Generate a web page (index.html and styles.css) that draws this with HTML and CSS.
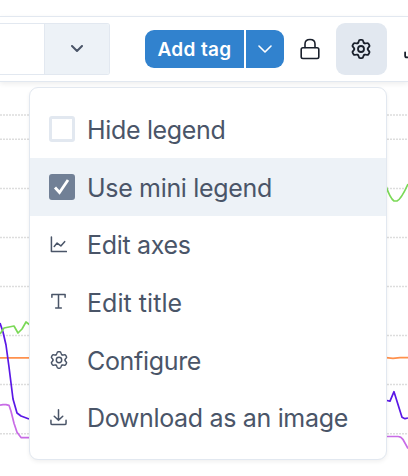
FILE: index.html
```html
<!DOCTYPE html>
<html lang="en">
<head>
<meta charset="utf-8">
<title>Chart settings</title>
<link rel="stylesheet" href="styles.css">
</head>
<body>
<svg width="0" height="0" class="defs">
  <defs><path id="tooth" d="M6.650 4.200Q7.500 3.710 7.700 2.500 7.950 .900 9.200 .900H10.800Q12.050 .900 12.300 2.500 12.500 3.710 13.350 4.200"/></defs>
  <symbol id="gear" viewBox="0 0 20 20">
    <use href="#tooth"/>
    <use href="#tooth" transform="rotate(60 10 10)"/>
    <use href="#tooth" transform="rotate(120 10 10)"/>
    <use href="#tooth" transform="rotate(180 10 10)"/>
    <use href="#tooth" transform="rotate(240 10 10)"/>
    <use href="#tooth" transform="rotate(300 10 10)"/>
    <circle cx="10" cy="10" r="3"/>
  </symbol>
  <symbol id="tray" viewBox="0 0 18 18">
    <path d="M9 .8v11M4.500 7.600 9 12l4.500-4.400M1 12v3q0 1.500 1.500 1.500h13q1.500 0 1.500-1.500v-3"/>
  </symbol>
</svg>
<header class="toolbar">
  <div class="select"><div class="value"></div><div class="toggle"><svg class="icon" width="12" height="8" viewBox="0 0 12 8"><path d="M1 1l5 5 5-5"/></svg></div></div>
  <div class="tag-group">
    <button class="tag">Add tag</button>
    <button class="tag-more"><svg class="icon" width="14" height="8" viewBox="0 0 14 8"><path d="M1 1l6 6 6-6"/></svg></button>
  </div>
  <svg class="icon lock" width="20" height="22" viewBox="0 0 20 22"><rect x="1.200" y="9.700" width="17.600" height="10.800" rx="1.700"/><path d="M5 9.500V6q0-4.500 5-4.500T15 6v3.500"/></svg>
  <button class="settings"><svg class="icon" width="20" height="20"><use href="#gear"/></svg></button>
  <svg class="icon export" width="20" height="20"><use href="#tray"/></svg>
</header>
<main class="chart">
  <svg width="408" height="394" viewBox="0 82 408 394">
    <path class="grid" d="M0 115H408M0 139.300H408M0 188.500H408M0 237.500H408M0 286.500H408M0 335.500H408M0 384.500H408M0 433.800H408"/>
    <path class="line orange" d="M0 357.800H29M386 357.700l7 .7 7-.7h8"/>
    <path class="line pink" d="M0 405.200l3-.6h3l3 .7 2 6 3 12 3 9 4 5.300h9M386 436.500h12q3 0 5 3l5 9"/>
    <path class="line purple" d="M0 323l3 9 3 13 3 22 4 32 4 14 4 3 8 3M386 400.200l4 1 4-9.500 8 25.500 3 1.500 3-.7"/>
    <path class="line green" d="M0 334l4-6 10-2 4 7 4-4 4-7 4 3M386 186c3 9 5 13 8 15h3c4-2 7-8 11-17"/>
  </svg>
</main>
<div class="menu">
  <div class="item"><span class="box"></span><span class="label">Hide legend</span></div>
  <div class="item active"><span class="box checked"><svg width="20" height="20" viewBox="0 0 20 20"><path d="M3 10.500l4.500 5 8.500-12.500"/></svg></span><span class="label">Use mini legend</span></div>
  <div class="item"><span class="slot"><svg class="icon" width="17" height="17" viewBox="0 0 18 18"><path d="M1.500 1v15.500h16M4.500 11l3-3.500 4 3 4-4.500"/></svg></span><span class="label">Edit axes</span></div>
  <div class="item"><span class="slot"><svg class="icon" width="17" height="17" viewBox="0 0 18 18"><path d="M2 4.500V1.700h14v2.800M9 1.700V16M6 16h6"/></svg></span><span class="label loose">Edit title</span></div>
  <div class="item"><span class="slot"><svg class="icon" width="18" height="18"><use href="#gear"/></svg></span><span class="label">Configure</span></div>
  <div class="item"><span class="slot"><svg class="icon" width="17" height="17"><use href="#tray"/></svg></span><span class="label">Download as an image</span></div>
</div>
</body>
</html>
```

FILE: styles.css
```css
* { box-sizing: border-box; }
body { margin: 0; width: 408px; height: 476px; overflow: hidden; background: #fff; font-family: Inter, sans-serif; position: relative; }
.defs { position: absolute; }
.icon { fill: none; stroke: currentColor; stroke-width: 1.6; stroke-linecap: round; stroke-linejoin: round; flex: none; }
button { border: 0; padding: 0; color: #fff; font-family: inherit; display: flex; align-items: center; justify-content: center; }
.toolbar > * { flex: none; }
.toolbar { position: relative; margin-top: 16px; height: 66px; border-top: 1px solid #e2e8f0; border-bottom: 1px solid #e2e8f0; display: flex; align-items: center; padding-bottom: 1px; color: #1a202c; background: #fff; box-shadow: 0 2px 5px rgba(0,0,0,.07); }
.select { width: 110px; height: 52px; border: 1px solid #e2e8f0; border-left: 0; border-radius: 0 3px 3px 0; display: flex; overflow: hidden; color: #4a5568; }
.value { width: 44px; }
.toggle { flex: 1; border-left: 1px solid #e2e8f0; background: #edf2f7; display: flex; align-items: center; justify-content: center; }
.toggle .icon { stroke-width: 2; }
.tag-group { margin-left: 35px; display: flex; gap: 2px; }
.tag { width: 99px; height: 38px; background: #3182ce; border-radius: 9px 0 0 9px; font-size: 19px; font-weight: 600; letter-spacing: .35px; padding-top: 1px; }
.tag-more { width: 38px; height: 38px; background: #3182ce; border-radius: 0 9px 9px 0; }
.lock { margin-left: 16px; }
.settings { margin-left: 16px; width: 51px; height: 52px; border-radius: 9px; background: #e2e8f0; color: #1a202c; }
.settings .icon { stroke-width: 1.8; margin-right: 1px; }
.export { margin-left: 17px; }
.chart { height: 394px; }
.chart svg { display: block; }
.grid { stroke: #ddd; stroke-width: 1.4; stroke-dasharray: 2 1; }
.line { fill: none; stroke-width: 1.7; stroke-linejoin: round; }
.orange { stroke: #ff914d; }
.pink { stroke: #c86be6; }
.purple { stroke: #5a17e6; }
.green { stroke: #7bd957; }
.menu { position: absolute; left: 29px; top: 87px; width: 358px; height: 373px; padding-top: 12.4px; border: 1px solid #e2e8f0; border-radius: 9px; background: #fff; box-shadow: 0 2px 4px rgba(0,0,0,.06); }
.item { height: 57.7px; padding-left: 19px; display: flex; align-items: center; gap: 12px; color: #4a5568; font-size: 25px; letter-spacing: -.33px; white-space: nowrap; }
.label { padding-top: 1.2px; }
.loose { letter-spacing: .05px; }
.active { background: #edf2f7; }
.box { width: 26px; height: 26px; border: 3px solid #e2e8f0; border-radius: 3px; }
.checked { border-color: #718096; background: #718096; }
.checked svg { display: block; fill: none; stroke: #fff; stroke-width: 2.8; }
.slot { width: 26px; height: 18px; padding-left: 1px; }
.slot .icon { display: block; }
```
